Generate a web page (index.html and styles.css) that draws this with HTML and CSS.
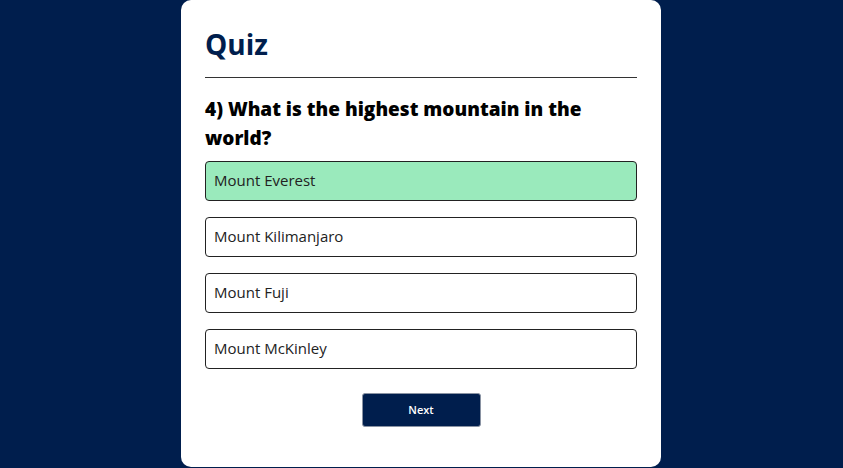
FILE: index.html
```html
<!DOCTYPE html>
<html lang="en">
<head>
<meta charset="utf-8">
<title>Quiz</title>
<link rel="stylesheet" href="styles.css">
</head>
<body>
<div class="app">
  <h1 class="title">Quiz</h1>
  <div class="quiz">
    <h2 class="question">4) What is the highest mountain in the world?</h2>
    <div class="answers">
      <button class="btn correct">Mount Everest</button>
      <button class="btn">Mount Kilimanjaro</button>
      <button class="btn">Mount Fuji</button>
      <button class="btn">Mount McKinley</button>
    </div>
    <button class="next-btn">Next</button>
  </div>
</div>
</body>
</html>
```
FILE: styles.css
```css
* { box-sizing: border-box; }
html, body { margin: 0; padding: 0; }
body {
  background: #001e4d;
  font-family: "Open Sans", "DejaVu Sans", sans-serif;
  height: 468px;
  overflow: hidden;
  display: flex;
  justify-content: center;
  align-items: flex-start;
  padding-right: 1px;
}
.app {
  width: 480px;
  height: 467px;
  background: #fff;
  border-radius: 10px;
  padding: 24px 24px 0;
}
.title {
  margin: 0;
  font-size: 28px;
  line-height: 40px;
  font-weight: 700;
  color: #001e4d;
  padding-bottom: 13px;
  border-bottom: 1px solid #333;
}
.quiz { padding-top: 17px; }
.question {
  margin: 0;
  font-size: 19px;
  line-height: 29px;
  font-weight: 800;
  color: #000;
}
.answers {
  display: flex;
  flex-direction: column;
  gap: 16px;
  margin-top: 8px;
}
.btn {
  display: block;
  width: 100%;
  height: 40px;
  background: #fff;
  color: #222;
  border: 1px solid #222;
  border-radius: 4px;
  padding: 0 8px 2px;
  text-align: left;
  font-family: inherit;
  font-size: 15px;
  font-weight: 500;
}
.btn.correct { background: #9aeabc; }
.next-btn {
  display: block;
  width: 119px;
  height: 34px;
  margin: 24px auto 0;
  background: #001e4d;
  color: #fff;
  border: 1px solid #8a93a3;
  border-radius: 3px;
  padding: 0 0 2px;
  font-family: inherit;
  font-size: 11px;
  font-weight: 600;
}
```
